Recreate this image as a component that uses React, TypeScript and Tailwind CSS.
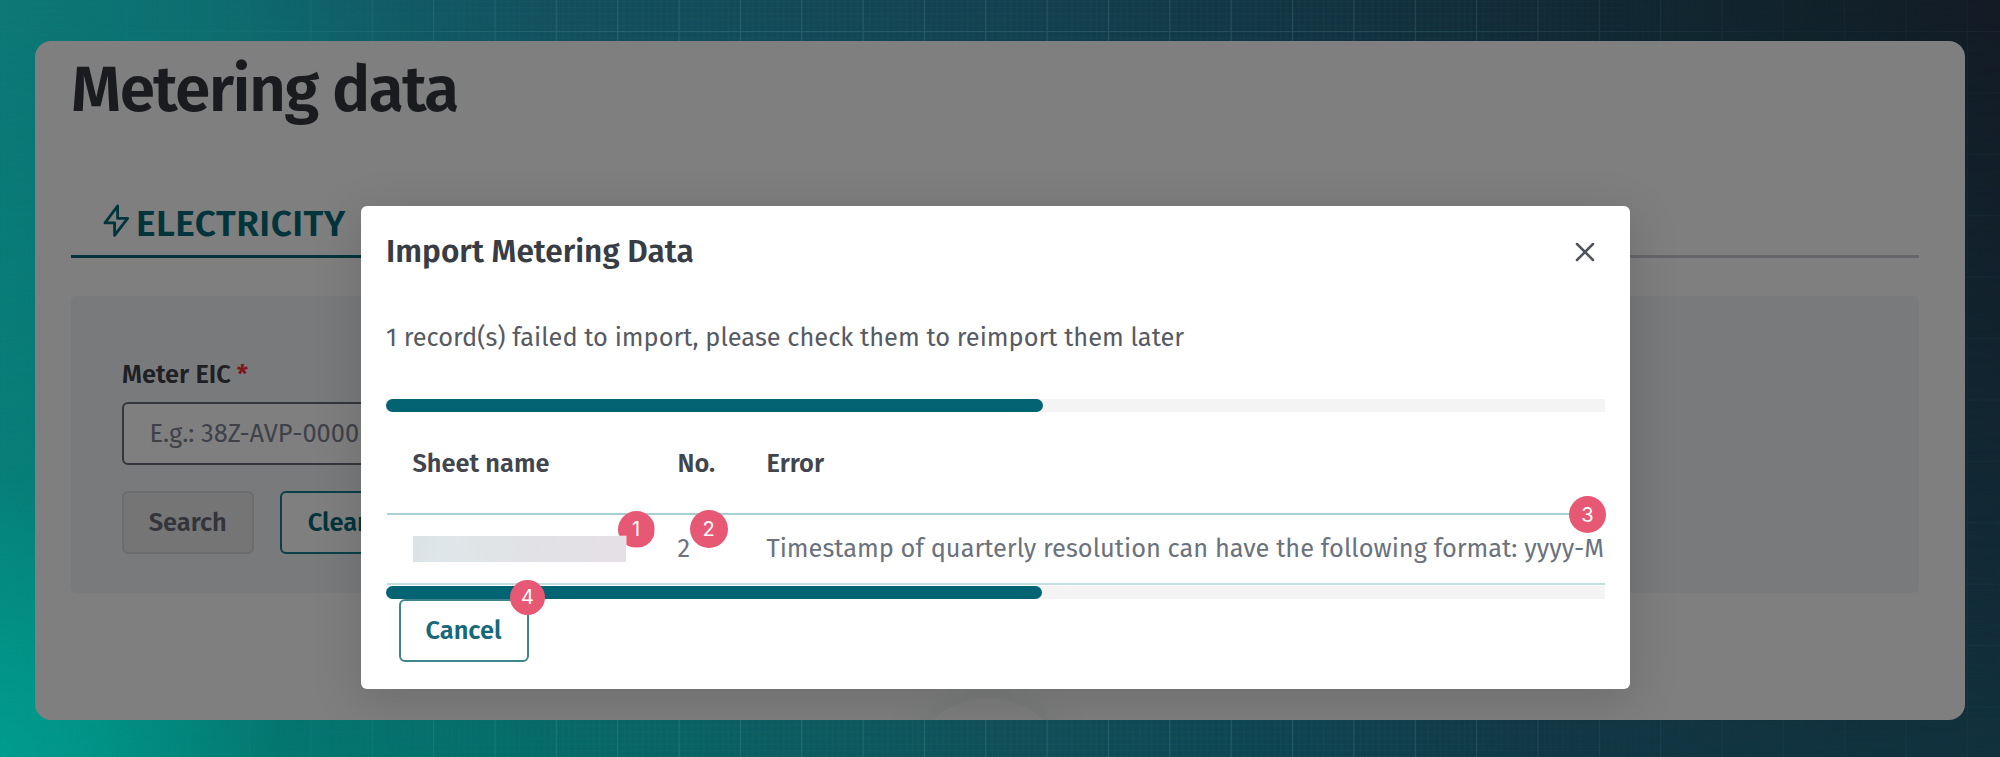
import { X } from "lucide-react";
import type { ReactNode } from "react";

const columns = "grid grid-cols-[265px_89px_1fr] pl-[26px]";

function Backdrop() {
  return (
    <div className="absolute inset-0">
      <div className="absolute inset-0 bg-[linear-gradient(90deg,#03857c_0%,#047a72_10%,#066e6a_25%,#0c5c60_40%,#105059_50%,#0f4452_65%,#123845_77%,#11313d_100%)]" />
      <div className="absolute inset-0 bg-[linear-gradient(90deg,#0c7876_0%,#0d6e70_10%,#115a65_20%,#124f5d_28%,#134a58_38%,#134150_50%,#123442_65%,#112a35_77%,#11222b_90%,#131b25_100%)] [mask-image:linear-gradient(180deg,#000_0%,rgba(0,0,0,0.65)_45%,transparent_100%)]" />
      <div className="absolute inset-0 bg-[radial-gradient(circle_at_0_100%,#009c8e_0%,rgba(0,156,142,0)_280px)]" />
      <svg className="absolute inset-0 h-full w-full" aria-hidden="true">
        <defs>
          <pattern id="minor" x="4" y="0.8" width="6.135" height="6.14" patternUnits="userSpaceOnUse">
            <path d="M0.5 0V6.2M0 0.5H6.2" stroke="#7fd0d0" strokeOpacity="0.04" />
          </pattern>
          <pattern id="major" x="3.6" y="31" width="61.35" height="61.4" patternUnits="userSpaceOnUse">
            <path d="M0.5 0V61.4M0 0.5H61.4" stroke="#9fdede" strokeOpacity="0.13" />
          </pattern>
          <linearGradient id="fade">
            <stop offset="0" stopColor="#fff" stopOpacity="0.12" />
            <stop offset="0.1" stopColor="#fff" stopOpacity="0.15" />
            <stop offset="0.3" stopColor="#fff" />
            <stop offset="0.7" stopColor="#fff" />
            <stop offset="0.88" stopColor="#fff" stopOpacity="0.2" />
            <stop offset="1" stopColor="#fff" stopOpacity="0.25" />
          </linearGradient>
          <mask id="gridMask">
            <rect width="100%" height="100%" fill="url(#fade)" />
          </mask>
        </defs>
        <g mask="url(#gridMask)">
          <rect width="100%" height="100%" fill="url(#minor)" />
          <rect width="100%" height="100%" fill="url(#major)" />
        </g>
      </svg>
    </div>
  );
}

function Marker({ className, children }: { className: string; children: ReactNode }) {
  return (
    <span
      className={`absolute flex items-center justify-center rounded-full bg-[#e75874] font-['Inter',sans-serif] text-[20px] leading-none text-white ${className}`}
    >
      {children}
    </span>
  );
}

function ScrollTrack({ className, thumb }: { className: string; thumb: string }) {
  return (
    <div className={`h-[13px] w-[1218.5px] bg-[#f4f4f4] ${className}`}>
      <div className={`h-full rounded-full bg-[#026373] ${thumb}`} />
    </div>
  );
}

function ImportDialog() {
  return (
    <section className="absolute top-[164.5px] left-[325.5px] flex h-[483px] w-[1269.5px] flex-col rounded-[6px] bg-white pl-[25.5px] shadow-[0_11px_45px_6px_rgba(0,0,0,0.12)]">
      <header className="flex h-[90px] items-center justify-between pr-[29px]">
        <h2 className="text-[31.6px] leading-[40px] font-semibold text-[#383c45]">Import Metering Data</h2>
        <X className="mt-[3px] h-[32px] w-[32px] text-[#50545c]" strokeWidth={1.9} />
      </header>
      <p className="mt-[22px] h-[81.5px] text-[25.4px] leading-[40px] text-[#565a62]">
        1 record(s) failed to import, please check them to reimport them later
      </p>
      <ScrollTrack className="" thumb="w-[657px]" />
      <div className="ml-[0.5px] w-[1218px]">
        <div className={`${columns} h-[103px] border-b-2 border-[#a9ced5] pt-[31.5px] text-[25.4px] leading-[40px] font-semibold text-[#41454e]`}>
          <span>Sheet name</span>
          <span>No.</span>
          <span>Error</span>
        </div>
        <div className={`${columns} h-[69.5px] items-center border-b-2 border-[#c3dde1] text-[25.4px] leading-[40px] text-[#6b727c]`}>
          <span className="relative z-10 h-[26px] w-[213.5px] bg-[linear-gradient(100deg,#d8e3e6_0%,#dfe6e9_15%,#e1e2e5_50%,#e5e0e5_100%)]" />
          <span>2</span>
          <span className="whitespace-nowrap">
            Timestamp of quarterly resolution can have the following format: yyyy-M
          </span>
        </div>
      </div>
      <ScrollTrack className="mt-[1.5px]" thumb="w-[655.5px]" />
      <button className="ml-[12.5px] flex h-[63px] w-[130px] items-center justify-center rounded-[6px] border-2 border-[#3e8590] pt-[2px] text-[25.4px] font-semibold text-[#17697a]">
        Cancel
      </button>
      <div className="absolute top-[305px] left-[257px] size-[37px] [clip-path:polygon(0_0,100%_0,100%_100%,24%_100%,24%_68%,0_68%)]">
        <Marker className="inset-0">1</Marker>
      </div>
      <Marker className="top-[304px] left-[329px] size-[38px]">2</Marker>
      <Marker className="top-[290.5px] left-[1208.5px] size-[37px]">3</Marker>
      <Marker className="top-[374px] left-[149.5px] size-[35px]">4</Marker>
    </section>
  );
}

export default function App() {
  return (
    <div className="relative h-[757px] w-[2000px] overflow-hidden bg-[#0f4452] font-['Fira_Sans','Noto_Sans',sans-serif]">
      <Backdrop />
      <main className="relative mt-[41px] ml-[35px] h-[679px] w-[1930px] overflow-hidden rounded-[16px] bg-[#7f7f7f] px-[36px]">
        <h1 className="h-[163px] pt-[9px] text-[64px] leading-[80px] font-semibold tracking-[-1.55px] text-[#191b1f]">Metering data</h1>
        <div className="flex h-[54px] w-[1848px] border-b-[3px] border-[#65656a]">
          <div className="-mb-[3px] flex w-[314px] items-center border-b-[3px] border-[#02343c] pl-[32px] text-[#02343c]">
            <svg viewBox="0 0 26 34" className="-mt-[18px] h-[34px] w-[26px]" fill="none" stroke="currentColor" strokeWidth="2.8" strokeLinejoin="round">
              <path d="M14.6 2 2 18.8H11.6V31.4L24.6 14.4H14.6Z" />
            </svg>
            <span className="-mt-[12px] ml-[7px] text-[37px] leading-[44px] font-semibold tracking-[0.45px]">ELECTRICITY</span>
          </div>
        </div>
        <section className="mt-[38px] h-[297px] w-[1848px] rounded-[6px] bg-[#797a7c] pt-[56px] pl-[51px]">
          <label className="flex h-[50px] gap-[6px] pt-[3px] text-[25.4px] leading-[40px] font-semibold text-[#1e2024]">
            Meter EIC <span className="text-[#7f1518]">*</span>
          </label>
          <div className="flex h-[63px] w-[600px] items-center rounded-[6px] border-2 border-[#33363c] bg-[#7f7f7f] pt-[2px] pl-[25.5px] text-[25.4px] text-[#3e4148]">
            E.g.: 38Z-AVP-0000
          </div>
          <div className="mt-[26px] flex gap-[26px] text-[25.4px] font-semibold">
            <button className="flex h-[63px] w-[131.5px] items-center justify-center rounded-[6px] border-2 border-[#6b6c6e] bg-[#757575] pt-[2px] text-[#33353b]">
              Search
            </button>
            <button className="flex h-[63px] w-[116px] items-center justify-center rounded-[6px] border-2 border-[#0b4048] bg-[#7f7f7f] pt-[2px] text-[#02343c]">
              Clear
            </button>
          </div>
        </section>
        <div className="absolute top-[657px] left-[873px] size-[160px] rounded-full bg-[#7e7e7e] shadow-[0_0_26px_6px_rgba(90,108,104,0.25)]" />
        <ImportDialog />
      </main>
    </div>
  );
}
